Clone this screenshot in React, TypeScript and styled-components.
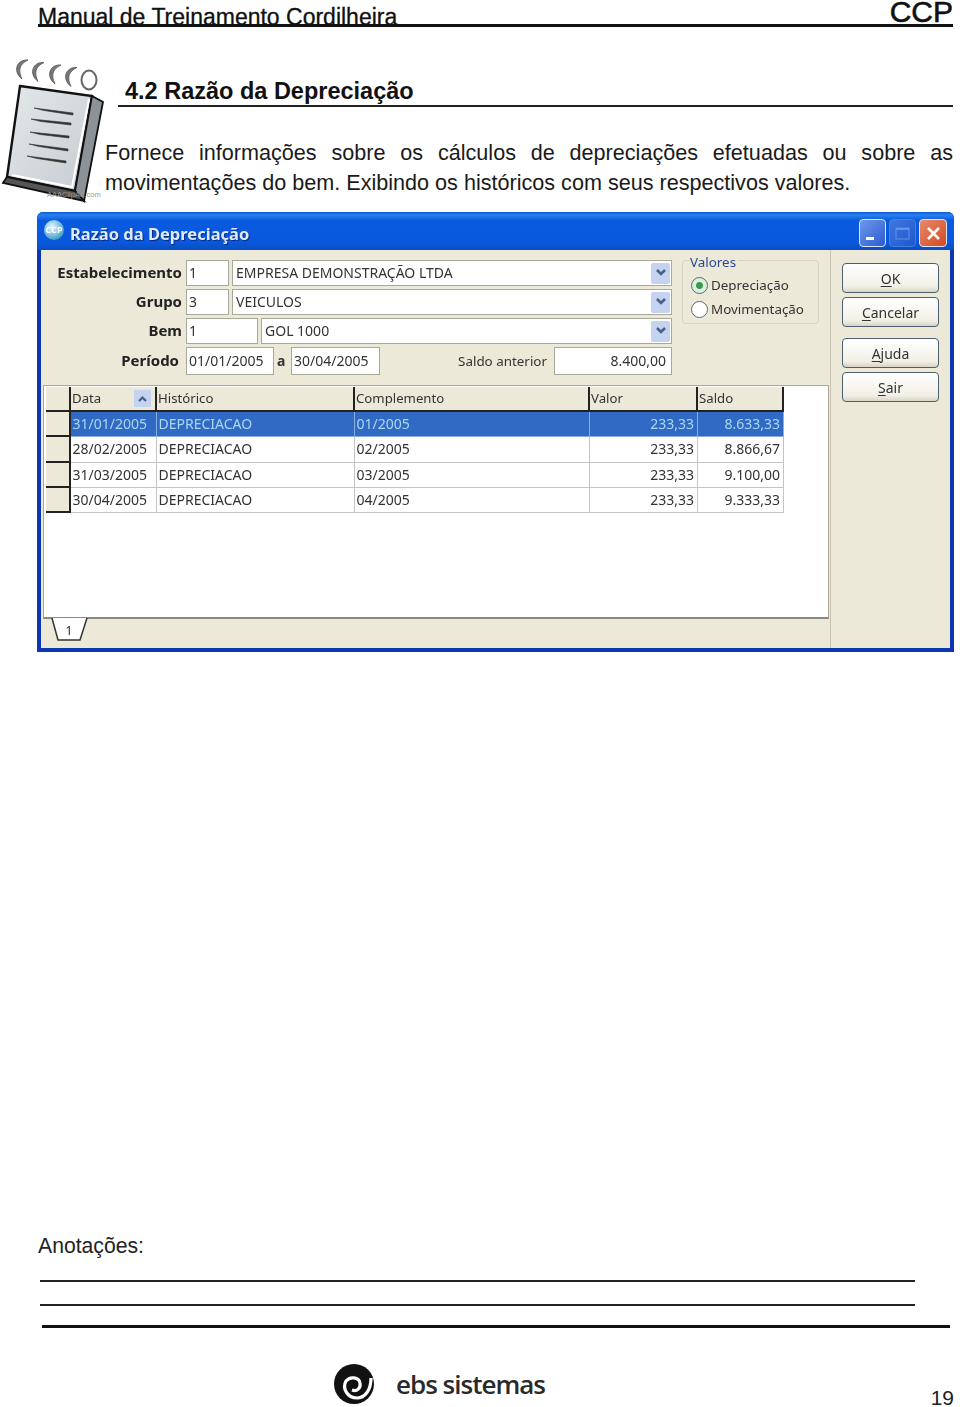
import * as React from 'react'
import styled, { createGlobalStyle } from 'styled-components'

const WINDOW_FONT = '"Noto Sans", "Liberation Sans", sans-serif'

const GlobalStyle = createGlobalStyle`
  html, body {
    margin: 0;
    padding: 0;
    background: #fff;
  }
`

const Page = styled.div`
  width: 960px;
  height: 1407px;
  overflow: hidden;
  display: flex;
  flex-direction: column;
  font-family: "Liberation Sans", Arial, sans-serif;
  color: #111;
`

const PageHeader = styled.header`
  height: 24px;
  margin: 0 7px 0 38px;
  border-bottom: 3px solid #111;
  display: flex;
  justify-content: space-between;
  align-items: flex-end;
`

const ManualTitle = styled.div`
  font-size: 23px;
  line-height: 26px;
  margin-bottom: -6px;
  -webkit-text-stroke: 0.3px #111;
`

const Product = styled.div`
  font-size: 30px;
  line-height: 24px;
  -webkit-text-stroke: 0.6px #111;
`

const Section = styled.section`
  display: flex;
  height: 185px;
`

const NoteIcon = styled.svg`
  flex: none;
  width: 105px;
  height: 147px;
  margin-top: 31px;
`

const SectionBody = styled.div`
  flex: 1;
  margin-right: 7px;
  padding-top: 50px;
`

const SectionTitle = styled.h2`
  margin: 0 0 0 13px;
  padding-left: 7px;
  height: 28px;
  font-size: 23.5px;
  line-height: 28px;
  font-weight: 700;
  border-bottom: 2px solid #222;
`

const Paragraph = styled.p`
  margin: 31px 0 0;
  font-size: 21.6px;
  line-height: 30px;
  text-align: justify;
  color: #1a1a1a;
`

const AppWindow = styled.div`
  margin-left: 37px;
  width: 917px;
  height: 440px;
  box-sizing: border-box;
  background: #ece9d8;
  border: solid #0d37b0;
  border-width: 0 4px 4px 4px;
  border-radius: 6px 6px 0 0;
  font-family: ${WINDOW_FONT};
  font-size: 14px;
  color: #333;
  display: flex;
  flex-direction: column;
  filter: blur(0.3px);
`

const TitleBar = styled.div`
  height: 38px;
  flex: none;
  margin: 0 -4px;
  padding: 0 7px 0 5px;
  border-radius: 6px 6px 0 0;
  display: flex;
  align-items: center;
  background: linear-gradient(180deg, #0a5bd6 0, #2a80ee 8%, #0a5ae0 22%, #0a58dc 80%, #0b4cc0 100%);
`

const AppLogo = styled.div`
  width: 20px;
  height: 20px;
  border-radius: 50%;
  background: radial-gradient(circle at 40% 35%, #e8f6ff, #3aa0c8 75%);
  color: #fff;
  font-size: 9px;
  font-weight: 700;
  line-height: 20px;
  text-align: center;
  margin: 0 6px 2px 2px;
`

const WindowTitle = styled.div`
  flex: 1;
  padding-top: 4px;
  font-size: 16.5px;
  font-weight: 700;
  color: #dcebff;
  text-shadow: 1px 1px 1px #0a2a80;
`

const CaptionButton = styled.div<{ $kind: 'min' | 'max' | 'close' }>`
  width: ${({ $kind }) => ($kind === 'close' ? 28 : 27)}px;
  height: 28px;
  margin: 4px 0 0 3px;
  box-sizing: border-box;
  border-radius: 4px;
  border: 1px solid ${({ $kind }) => ($kind === 'max' ? '#3f7fe0' : '#d8e6f8')};
  background: ${({ $kind }) =>
    $kind === 'close'
      ? 'linear-gradient(135deg, #e88a6c, #d24a22)'
      : $kind === 'min'
        ? 'linear-gradient(135deg, #6f98ea, #2a5cd0)'
        : 'linear-gradient(135deg, #3f76e0, #1f58cc)'};
  display: flex;
  align-items: center;
  justify-content: center;
`

const WindowBody = styled.div`
  flex: 1;
  display: flex;
  min-height: 0;
`

const MainPane = styled.div`
  width: 789px;
  flex: none;
  display: flex;
  flex-direction: column;
  border-right: 1px solid #c8c4b0;
`

const FormArea = styled.div`
  height: 135px;
  flex: none;
  display: flex;
`

const Fields = styled.div`
  width: 631px;
  flex: none;
  padding-top: 10px;
  display: flex;
  flex-direction: column;
  gap: 3px;
`

const FieldRow = styled.div<{ $tall?: boolean }>`
  height: ${({ $tall }) => ($tall ? 28 : 26)}px;
  display: flex;
  align-items: stretch;
`

const Label = styled.div<{ $width?: number }>`
  width: ${({ $width }) => $width ?? 141}px;
  margin-right: ${({ $width }) => ($width ? 145 - $width : 4)}px;
  padding-bottom: 2px;
  box-sizing: border-box;
  flex: none;
  display: flex;
  justify-content: flex-end;
  align-items: center;
  font-weight: 700;
  font-size: 15px;
  color: #222;
  white-space: nowrap;
`

const Input = styled.div<{ $width: number; $right?: boolean }>`
  width: ${({ $width }) => $width}px;
  margin-right: 3px;
  flex: none;
  box-sizing: border-box;
  background: #fff;
  border: 1px solid #a9a99a;
  padding: 0 5px 2px 2px;
  display: flex;
  align-items: center;
  justify-content: ${({ $right }) => ($right ? 'flex-end' : 'flex-start')};
  white-space: nowrap;
`

const Combo = styled.div`
  flex: 1;
  box-sizing: border-box;
  background: #fff;
  border: 1px solid #a9a99a;
  padding: 0 1px 0 3px;
  display: flex;
  justify-content: space-between;
  align-items: center;
  white-space: nowrap;
`

const ComboText = styled.span`
  margin-bottom: 2px;
`

const ComboArrow = styled.div`
  width: 19px;
  height: 21px;
  background: #c3d3f0;
  border-radius: 2px;
  display: flex;
  align-items: center;
  justify-content: center;
`

const Joiner = styled.div`
  width: 11px;
  margin-right: 3px;
  flex: none;
  font-weight: 700;
  line-height: 28px;
`

const PlainLabel = styled.div`
  width: 164px;
  margin-right: 7px;
  flex: none;
  text-align: right;
  font-size: 13.4px;
  line-height: 28px;
  white-space: nowrap;
`

const ValoresGroup = styled.div`
  position: relative;
  width: 137px;
  height: 64px;
  margin: 10px 0 0 10px;
  box-sizing: border-box;
  border: 1px solid #d8d4c0;
  border-radius: 4px;
  padding: 14px 0 0 8px;
  font-size: 13.4px;
  display: flex;
  flex-direction: column;
  gap: 4px;
`

const Legend = styled.div`
  position: absolute;
  left: 7px;
  top: -8px;
  padding-right: 2px;
  background: #ece9d8;
  color: #2a4a9a;
  line-height: 18px;
`

const RadioRow = styled.div`
  height: 20px;
  display: flex;
  align-items: center;
  gap: 3px;
  white-space: nowrap;
`

const Radio = styled.div<{ $checked?: boolean }>`
  width: 17px;
  height: 17px;
  flex: none;
  box-sizing: border-box;
  border-radius: 50%;
  border: 1px solid #5a6a70;
  background: ${({ $checked }) =>
    $checked ? 'radial-gradient(circle, #3c9a50 0 3px, #dcefe0 4px)' : '#fff'};
`

const GridPanel = styled.div`
  height: 234px;
  flex: none;
  margin: 0 1px 0 2px;
  background: #fff;
  border: solid #aca899;
  border-width: 1px 1px 0 1px;
  border-bottom: 2px solid #8a8a80;
  padding: 1px 0 0 2px;
  box-sizing: border-box;
`

const DataGrid = styled.div`
  display: grid;
  grid-template-columns: 25px 86px 198px 235px 108px 86px;
  grid-template-rows: 25px repeat(4, 25.33px);
  width: 738px;
`

const HeaderCell = styled.div`
  background: #ece9d8;
  border-right: 2px solid #222;
  border-bottom: 2px solid #222;
  padding-left: 1px;
  font-size: 13.2px;
  line-height: 23px;
  display: flex;
  justify-content: space-between;
  align-items: center;
`

const SortButton = styled.div`
  width: 17px;
  height: 17px;
  margin-right: 4px;
  background: #c3d3f0;
  display: flex;
  align-items: center;
  justify-content: center;
`

const RowHeader = styled.div`
  background: #ece9d8;
  border-right: 2px solid #222;
  border-bottom: 2px solid #222;
`

const Cell = styled.div<{ $selected?: boolean; $right?: boolean }>`
  background: ${({ $selected }) => ($selected ? '#316ac5' : '#fff')};
  color: ${({ $selected }) => ($selected ? '#a8d8f0' : '#333')};
  border-right: 1px solid ${({ $selected }) => ($selected ? '#8aaee0' : '#c4c4c4')};
  border-bottom: 1px solid ${({ $selected }) => ($selected ? '#8aaee0' : '#c4c4c4')};
  padding: 0 3px 0 1.5px;
  line-height: 24px;
  text-align: ${({ $right }) => ($right ? 'right' : 'left')};
  white-space: nowrap;
`

const TabBar = styled.div`
  flex: 1;
  margin-left: 2px;
  position: relative;
  background: #ece9d8;
`

const TabShape = styled.svg`
  position: absolute;
  left: 8px;
  top: -1px;
`

const ButtonPane = styled.div`
  flex: 1;
  padding: 13px 0 0 11px;
  display: flex;
  flex-direction: column;
`

const Button = styled.div<{ $gap?: number }>`
  width: 97px;
  height: 30px;
  margin-bottom: ${({ $gap }) => $gap ?? 4}px;
  flex: none;
  box-sizing: border-box;
  border: 1px solid #4a6070;
  border-radius: 4px;
  background: linear-gradient(180deg, #fff, #f2f0e6 80%, #d8d4c4);
  color: #333;
  text-align: center;
  line-height: 30px;
  u {
    text-underline-offset: 2px;
  }
`

const Notes = styled.div`
  margin: 581px 0 0 38px;
  font-size: 21.2px;
  line-height: 26px;
  color: #222;
`

const NoteLine = styled.div<{ $top: number }>`
  width: 875px;
  margin: ${({ $top }) => $top}px 0 0 40px;
  border-top: 2px solid #222;
`

const FooterRule = styled.div`
  width: 908px;
  margin: 19px 0 0 42px;
  border-top: 3px solid #111;
`

const Footer = styled.footer`
  flex: 1;
  display: flex;
  align-items: flex-start;
  position: relative;
`

const Brand = styled.div`
  display: flex;
  align-items: center;
  margin: 35px 0 0 333px;
  gap: 19px;
`

const BrandName = styled.div`
  font-family: "Open Sans", "Noto Sans", sans-serif;
  font-size: 26px;
  line-height: 40px;
  font-weight: 600;
  letter-spacing: -1px;
  color: #2a2a2a;
`

const PageNumber = styled.div`
  position: absolute;
  right: 6px;
  top: 61px;
  font-size: 21px;
  line-height: 17px;
  color: #222;
`

const Chevron: React.FC = () => (
  <svg width="12" height="10" viewBox="0 0 12 10">
    <path d="M2 2l4 4 4-4" fill="none" stroke="#4a5f88" strokeWidth="2.6" />
  </svg>
)

const Notebook: React.FC = () => (
  <NoteIcon viewBox="0 58 105 147">
    <defs>
      <linearGradient id="sheet" x1="0" y1="0" x2="1" y2="1">
        <stop offset="0" stopColor="#e4e8ea" />
        <stop offset="1" stopColor="#c6ccd2" />
      </linearGradient>
    </defs>
    <polygon points="20,86 92,96 75,191 7,177" fill="url(#sheet)" stroke="#111" strokeWidth="2.4" />
    <polyline points="89,99 72,187 12,175" fill="none" stroke="#fff" strokeWidth="2" />
    <polygon points="92,96 103,102 84,201 75,191" fill="#8c9296" stroke="#111" strokeWidth="1.8" />
    <polygon points="7,177 75,191 84,201 3,183" fill="#555" stroke="#111" strokeWidth="1.8" />
    {[
      [34, 108, 73, 114],
      [31, 119, 71, 124],
      [30, 132, 69, 137],
      [29, 144, 68, 150],
      [27, 156, 66, 162],
    ].map(([x1, y1, x2, y2]) => (
      <polygon
        key={y1}
        points={`${x1},${y1} ${x2},${y2 - 1} ${x2},${y2 + 1} ${x1 + 10},${y1 + 2.5}`}
        fill="#333"
        stroke="#333"
        strokeWidth="0.6"
      />
    ))}
    {[15, 31, 48, 64].map((x, i) => (
      <path
        key={x}
        d={`M${x + 13} ${60 + i * 2.5}C${x + 2} ${59 + i * 2.5} ${x - 3} ${71 + i * 2.5} ${x + 7} ${79 + i * 2.5}C${x + 3} ${71 + i * 2.5} ${x + 4} ${64 + i * 2.5} ${x + 13} ${60 + i * 2.5}z`}
        fill="#777"
        stroke="#555"
        strokeWidth="0.8"
      />
    ))}
    <ellipse cx="89" cy="80" rx="7.5" ry="9.5" fill="none" stroke="#666" strokeWidth="2" />
    <text x="47" y="197" fontFamily="Liberation Sans, sans-serif" fontSize="7.5" fill="#999">
      AAAClipArt.com
    </text>
  </NoteIcon>
)

const Spiral: React.FC = () => (
  <svg width="44" height="42" viewBox="0 0 44 42">
    <circle cx="21" cy="21" r="20" fill="#111" />
    <path
      d="M19 27C24 29 28 25 27 20C26 14 17 13 13 18C9 25 14 35 24 35C32 35 38 27 38 15"
      fill="none"
      stroke="#fff"
      strokeWidth="3.2"
    />
  </svg>
)

const rows = [
  ['31/01/2005', 'DEPRECIACAO', '01/2005', '233,33', '8.633,33'],
  ['28/02/2005', 'DEPRECIACAO', '02/2005', '233,33', '8.866,67'],
  ['31/03/2005', 'DEPRECIACAO', '03/2005', '233,33', '9.100,00'],
  ['30/04/2005', 'DEPRECIACAO', '04/2005', '233,33', '9.333,33'],
]

const App: React.FC = () => (
  <Page>
    <GlobalStyle />
    <PageHeader>
      <ManualTitle>Manual de Treinamento Cordilheira</ManualTitle>
      <Product>CCP</Product>
    </PageHeader>
    <Section>
      <Notebook />
      <SectionBody>
        <SectionTitle>4.2 Razão da Depreciação</SectionTitle>
        <Paragraph>
          Fornece informações sobre os cálculos de depreciações efetuadas ou sobre as movimentações do bem.
          Exibindo os históricos com seus respectivos valores.
        </Paragraph>
      </SectionBody>
    </Section>
    <AppWindow>
      <TitleBar>
        <AppLogo>CCP</AppLogo>
        <WindowTitle>Razão da Depreciação</WindowTitle>
        <CaptionButton $kind="min">
          <svg width="17" height="17" viewBox="0 0 17 17">
            <rect x="2" y="12" width="8" height="3" fill="#fff" />
          </svg>
        </CaptionButton>
        <CaptionButton $kind="max">
          <svg width="17" height="17" viewBox="0 0 17 17">
            <rect x="2" y="3" width="13" height="11" fill="none" stroke="#5f94e8" />
            <rect x="2" y="3" width="13" height="2" fill="#5f94e8" />
          </svg>
        </CaptionButton>
        <CaptionButton $kind="close">
          <svg width="17" height="17" viewBox="0 0 17 17">
            <path d="M3 3l11 11M14 3L3 14" stroke="#fff" strokeWidth="2.6" />
          </svg>
        </CaptionButton>
      </TitleBar>
      <WindowBody>
        <MainPane>
          <FormArea>
            <Fields>
              <FieldRow>
                <Label>Estabelecimento</Label>
                <Input $width={43}>1</Input>
                <Combo>
                  <ComboText>EMPRESA DEMONSTRAÇÃO LTDA</ComboText>
                  <ComboArrow>
                    <Chevron />
                  </ComboArrow>
                </Combo>
              </FieldRow>
              <FieldRow>
                <Label>Grupo</Label>
                <Input $width={43}>3</Input>
                <Combo>
                  <ComboText>VEICULOS</ComboText>
                  <ComboArrow>
                    <Chevron />
                  </ComboArrow>
                </Combo>
              </FieldRow>
              <FieldRow>
                <Label>Bem</Label>
                <Input $width={72}>1</Input>
                <Combo>
                  <ComboText>GOL 1000</ComboText>
                  <ComboArrow>
                    <Chevron />
                  </ComboArrow>
                </Combo>
              </FieldRow>
              <FieldRow $tall>
                <Label $width={138}>Período</Label>
                <Input $width={88}>01/01/2005</Input>
                <Joiner>a</Joiner>
                <Input $width={89}>30/04/2005</Input>
                <PlainLabel>Saldo anterior</PlainLabel>
                <Input $width={118} $right>
                  8.400,00
                </Input>
              </FieldRow>
            </Fields>
            <ValoresGroup>
              <Legend>Valores</Legend>
              <RadioRow>
                <Radio $checked />
                Depreciação
              </RadioRow>
              <RadioRow>
                <Radio />
                Movimentação
              </RadioRow>
            </ValoresGroup>
          </FormArea>
          <GridPanel>
            <DataGrid>
              <HeaderCell />
              <HeaderCell>
                Data
                <SortButton>
                  <svg width="11" height="8" viewBox="0 0 11 8">
                    <path d="M2 6l3.5-3.5L9 6" fill="none" stroke="#4a5f88" strokeWidth="2.2" />
                  </svg>
                </SortButton>
              </HeaderCell>
              <HeaderCell>Histórico</HeaderCell>
              <HeaderCell>Complemento</HeaderCell>
              <HeaderCell>Valor</HeaderCell>
              <HeaderCell>Saldo</HeaderCell>
              {rows.map((row, index) => (
                <React.Fragment key={row[0]}>
                  <RowHeader />
                  {row.map((value, col) => (
                    <Cell key={col} $selected={index === 0} $right={col > 2}>
                      {value}
                    </Cell>
                  ))}
                </React.Fragment>
              ))}
            </DataGrid>
          </GridPanel>
          <TabBar>
            <TabShape width="40" height="24" viewBox="0 0 40 24">
              <path d="M1 0l6 22h22l7-22" fill="#fff" stroke="#333" strokeWidth="1.5" />
              <text x="18" y="17" fontFamily="Noto Sans, sans-serif" fontSize="13" textAnchor="middle" fill="#333">
                1
              </text>
            </TabShape>
          </TabBar>
        </MainPane>
        <ButtonPane>
          <Button>
            <u>O</u>K
          </Button>
          <Button $gap={11}>
            <u>C</u>ancelar
          </Button>
          <Button>
            <u>A</u>juda
          </Button>
          <Button>
            <u>S</u>air
          </Button>
        </ButtonPane>
      </WindowBody>
    </AppWindow>
    <Notes>Anotações:</Notes>
    <NoteLine $top={21} />
    <NoteLine $top={22} />
    <FooterRule />
    <Footer>
      <Brand>
        <Spiral />
        <BrandName>ebs sistemas</BrandName>
      </Brand>
      <PageNumber>19</PageNumber>
    </Footer>
  </Page>
)

export default App
